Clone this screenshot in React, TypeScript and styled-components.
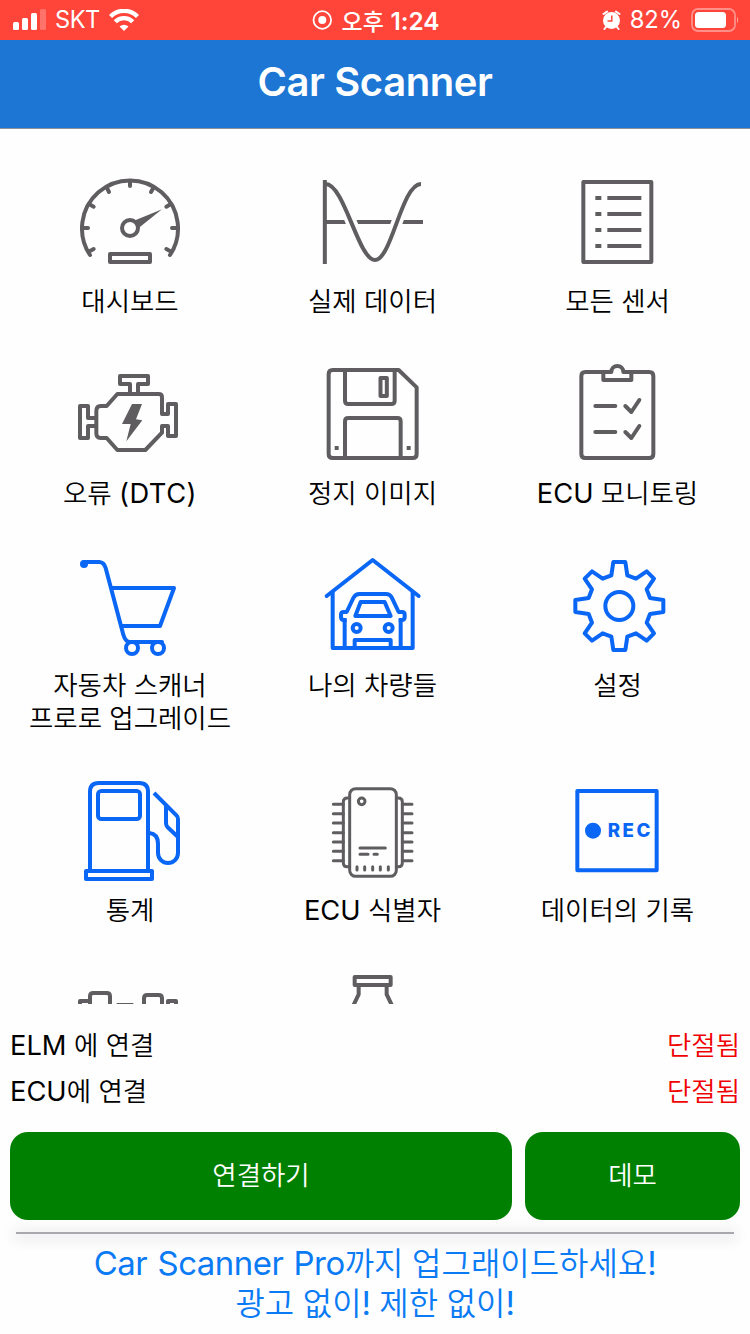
import React from "react";
import styled, { createGlobalStyle } from "styled-components";

const GREY = "#5f5d60";
const BLUE = "#0a66f5";

const GlobalStyle = createGlobalStyle`
  * { box-sizing: border-box; }
  body {
    margin: 0;
    background: #fefefe;
    font-family: Inter, "Noto Sans CJK KR", sans-serif;
  }
`;

const Screen = styled.div`
  width: 750px;
  height: 1334px;
  display: flex;
  flex-direction: column;
  overflow: hidden;
  background: #fefefe;
  color: #000;
`;

const StatusBar = styled.div`
  flex: none;
  height: 40px;
  display: grid;
  grid-template-columns: 1fr auto 1fr;
  align-items: center;
  padding: 0 11px 0 13px;
  background: #ff453a;
  color: #fff;
  font-size: 24px;
`;

const StatusGroup = styled.div<{ $align?: string }>`
  display: flex;
  align-items: center;
  justify-content: ${(p) => p.$align ?? "flex-start"};
  gap: 9px;
`;

const NavBar = styled.header`
  flex: none;
  height: 89px;
  display: flex;
  align-items: center;
  justify-content: center;
  padding-bottom: 4px;
  background: #1d76d4;
  border-bottom: 1px solid #8d9299;
`;

const Title = styled.h1`
  margin: 0;
  color: #fff;
  font-size: 40px;
  font-weight: 600;
  line-height: 48px;
  letter-spacing: -0.4px;
`;

const Menu = styled.main`
  flex: none;
  height: 875px;
  overflow: hidden;
  display: grid;
  grid-template-columns: 240px 245px 245px;
  align-content: start;
  row-gap: 48px;
  padding: 43px 10px 0;
`;

const Tile = styled.div`
  display: flex;
  flex-direction: column;
  align-items: center;
  gap: 11px;
`;

const IconBox = styled.svg<{ $color: string }>`
  display: block;
  width: 100px;
  height: 100px;
  overflow: visible;
  fill: none;
  stroke: ${(p) => p.$color};
  stroke-width: 12;
  stroke-linejoin: round;
  color: ${(p) => p.$color};
`;

const TileLabel = styled.div`
  text-align: center;
`;

const Line = styled.div<{ $size?: number; $weight?: number; $spacing?: number }>`
  height: ${(p) => ((p.$size ?? 28) * 33) / 28}px;
  line-height: ${(p) => ((p.$size ?? 28) * 33) / 28}px;
  font-size: ${(p) => p.$size ?? 28}px;
  font-weight: ${(p) => p.$weight ?? 400};
  letter-spacing: ${(p) => p.$spacing ?? 0}px;
  white-space: pre;
  word-spacing: 1.5px;
`;

const Latin = styled.span<{ $spacing?: number }>`
  font-size: 0.975em;
  letter-spacing: ${(p) => p.$spacing ?? 0}px;
`;

const Hangul = styled.span<{ $weight: number }>`
  font-family: "Noto Sans CJK KR", sans-serif;
  font-size: 0.945em;
  font-weight: ${(p) => p.$weight};
`;

const Footer = styled.footer`
  flex: 1;
  display: flex;
  flex-direction: column;
  padding: 16px 10px 0;
`;

const StatusRow = styled.div`
  display: flex;
  justify-content: space-between;
  align-items: center;
  height: 46px;
`;

const StateText = styled.div`
  color: #f00000;
`;

const Buttons = styled.div`
  display: grid;
  grid-template-columns: 502px 215px;
  justify-content: space-between;
  margin-top: 20px;
`;

const Button = styled.button`
  height: 88px;
  border: 0;
  border-radius: 18px;
  padding: 0 0 5px;
  background: #008000;
  color: #fff;
  font-family: inherit;
`;

const Divider = styled.div`
  height: 2px;
  margin: 12px 6px 0;
  background: #aaa8ac;
  box-shadow: 0 2px 14px 2px rgba(70, 50, 80, 0.16);
`;

const Promo = styled.div`
  display: flex;
  flex-direction: column;
  align-items: center;
  padding-top: 8px;
  color: #0a7bf5;
`;

interface MixedProps {
  text: string;
  size?: number;
  weight?: number;
  spacing?: number;
}

function Mixed({ text, size, weight = 350, spacing }: MixedProps) {
  const parts = text.match(/[A-Za-z0-9()!:]+(?: [A-Za-z]+)*|[^A-Za-z0-9()!:]+/g) ?? [];
  return (
    <Line $size={size}>
      {parts.map((part, i) =>
        /[A-Za-z0-9()!:]/.test(part) ? (
          <Latin key={i} $spacing={spacing}>{part}</Latin>
        ) : (
          <Hangul key={i} $weight={weight}>{part}</Hangul>
        )
      )}
    </Line>
  );
}

interface Item {
  lines: string[];
  spacing?: number;
  color: string;
  box: string;
  art: React.ReactNode;
}

const items: Item[] = [
  {
    lines: ["대시보드"],
    color: GREY,
    box: "240 36 300 300",
    art: (
      <>
        <path d="M270 285A144 144 0 1 1 510 285" strokeLinecap="round" />
        <path
          strokeLinecap="round"
          d="M390 62V78M320 82L327 96M460 84L453 96M267 132L281 140M513 132L499 140M250 204H264M530 204H516M270 273L281 267M510 273L499 267"
        />
        <circle cx="390" cy="204" r="24" />
        <path d="M402 182L486 148L416 204Z" fill="currentColor" stroke="none" />
        <rect x="330" y="282" width="120" height="24" />
      </>
    ),
  },
  {
    lines: ["실제 데이터"],
    color: GREY,
    box: "218 36 300 300",
    art: (
      <>
        <path d="M224 186H518" />
        <path d="M229 72C282 72 324 300 374 300S454 72 512 72" stroke="#fefefe" strokeWidth="34" />
        <path d="M223.5 60V312M226 72C282 72 324 300 374 300S454 72 512 72" />
      </>
    ),
  },
  {
    lines: ["모든 센서"],
    color: GREY,
    box: "954 36 300 300",
    art: (
      <>
        <rect x="1000" y="66" width="204" height="240" />
        <path d="M1036 114H1054M1072 114H1174M1036 162H1054M1072 162H1174M1036 210H1054M1072 210H1174M1036 258H1054M1072 258H1174" />
      </>
    ),
  },
  {
    lines: ["오류 (DTC)"],
    spacing: 0.5,
    color: GREY,
    box: "240 42 300 300",
    art: (
      <>
        <path d="M390 130V102H360V78H444V102H414V130" />
        <path d="M352 132H476Q486 132 486 142V192H504V162H528V258H504V228H486V248L436 300H352L320 264H302Q289 264 289 250V184Q289 168 302 168H320Z" />
        <path d="M289 204H264V168H240V264H264V228H289" />
        <path d="M396 162H426L408 208L427 211L379 274L392 222H366Z" fill="currentColor" stroke="none" />
      </>
    ),
  },
  {
    lines: ["정지 이미지"],
    color: GREY,
    box: "219 42 300 300",
    art: (
      <>
        <path d="M248 60H446L500 112V312Q500 324 488 324H248Q236 324 236 312V72Q236 60 248 60Z" />
        <path d="M285 60V152Q285 162 295 162H424Q434 162 434 152V60M285 324V214Q285 204 295 204H442Q452 204 452 214V324" />
        <rect x="391.5" y="84" width="19" height="54" />
        <path d="M254 294H266M470 294H482" />
      </>
    ),
  },
  {
    lines: ["ECU 모니토링"],
    color: GREY,
    box: "954 42 300 300",
    art: (
      <>
        <path d="M1006 66H1084A18 18 0 0 1 1120 66H1198Q1210 66 1210 78V312Q1210 324 1198 324H1006Q994 324 994 312V78Q994 66 1006 66Z" />
        <path d="M1060 66V90H1144V66" />
        <path strokeLinecap="round" d="M1036 168H1096M1126 168L1144 186L1168 150M1036 246H1096M1126 246L1144 264L1168 228" />
      </>
    ),
  },
  {
    lines: ["자동차 스캐너", "프로로 업그레이드"],
    color: BLUE,
    box: "240 48 300 300",
    art: (
      <>
        <circle cx="252" cy="72" r="12" fill="currentColor" stroke="none" />
        <path strokeLinecap="round" d="M252 66H298Q312 67 317 84L370 284Q376 305 390 306H486" />
        <path d="M336 144H522L480 258H366" />
        <circle cx="396" cy="324" r="18" fill="#fefefe" />
        <circle cx="474" cy="324" r="18" fill="#fefefe" />
      </>
    ),
  },
  {
    lines: ["나의 차량들"],
    color: BLUE,
    box: "219 48 300 300",
    art: (
      <>
        <path strokeLinecap="round" d="M230 168L368 60L506 168" />
        <path d="M248 156V324H488V156M284 238V324M452 238V324M314 324V300H422V324" />
        <path d="M290 240H282Q273 240 273 231V224Q273 216 281 216H290L310 174Q316 162 328 162H408Q419 162 425 172L446 216H456Q464 216 464 224V231Q464 240 455 240H446" />
        <path d="M332 186H404L422 228H316Z" />
        <circle cx="320" cy="264" r="12" />
        <circle cx="416" cy="264" r="12" />
      </>
    ),
  },
  {
    lines: ["설정"],
    color: BLUE,
    box: "954 48 300 300",
    art: (
      <g transform="translate(1108 198)">
        <path d="M-18-132L18-132L24-92L50-82L82-104L104-82L82-50L92-24L132-18L132 18L92 24L82 50L104 82L82 104L50 82L24 92L18 132L-18 132L-24 92L-50 82L-82 104L-104 82L-82 50L-92 24L-132 18L-132-18L-92-24L-82-50L-104-82L-82-104L-50-82L-24-92Z" />
        <circle r="42" />
      </g>
    ),
  },
  {
    lines: ["통계"],
    color: BLUE,
    box: "240 48 300 300",
    art: (
      <>
        <path d="M270 318V80Q270 54 296 54H418Q444 54 444 80V318" />
        <rect x="258" y="318" width="198" height="24" />
        <rect x="294" y="78" width="126" height="84" rx="10" />
        <path d="M448 204C466 206 474 218 474 236V264A30 30 0 0 0 534 264V162Q534 156 530 152L462 84M498 120V174Q498 182 503 187L534 216" />
      </>
    ),
  },
  {
    lines: ["ECU 식별자"],
    color: GREY,
    box: "219 48 300 300",
    art: (
      <g strokeWidth="9" strokeLinecap="round">
        <rect x="299" y="71" width="140" height="263" rx="18" />
        <path d="M299 99H292Q280 99 280 111V293Q280 305 292 305H299M439 99H445Q457 99 457 111V293Q457 305 445 305H439" />
        <path d="M250 118H280M250 146H280M250 174H280M250 203H280M250 231H280M250 259H280M250 287H280M457 118H486M457 146H486M457 174H486M457 203H486M457 231H486M457 259H486M457 287H486" />
        <circle cx="335" cy="109" r="10" />
        <path d="M330 249H406M330 268H354M372 268H382M321 305V315M344 305V315M368 305V315M391 305V315M415 305V315" />
      </g>
    ),
  },
  {
    lines: ["데이터의 기록"],
    color: BLUE,
    box: "954 48 300 300",
    art: (
      <>
        <rect x="982" y="78" width="238" height="238" />
        <circle cx="1029" cy="197" r="24" fill="currentColor" stroke="none" />
        <text x="1073" y="217" fontSize="56" fontWeight="800" textLength="128" fill="currentColor" stroke="none">
          REC
        </text>
      </>
    ),
  },
  {
    lines: [],
    color: GREY,
    box: "240 624 300 300",
    art: (
      <>
        <path d="M240 740V708H270M270 740V694Q270 684 280 684H320Q330 684 330 694V740M350 720H400" />
        <path d="M432 740V700Q432 690 442 690H476Q486 690 486 700V740M504 740V708H528V740" />
      </>
    ),
  },
  {
    lines: [],
    color: GREY,
    box: "219 624 300 300",
    art: <path d="M314 636H422V660H314ZM326 660V688L306 730M410 660V688L430 730" />,
  },
];

export default function App() {
  return (
    <Screen>
      <GlobalStyle />
      <StatusBar>
        <StatusGroup>
          <svg width="33" height="22" viewBox="0 0 33 22" fill="#fff">
            <rect y="13" width="6" height="8" rx="1.5" />
            <rect x="9" y="9" width="6" height="12" rx="1.5" />
            <rect x="18" y="4" width="6" height="17" rx="1.5" />
            <rect x="27" width="6" height="21" rx="1.5" opacity="0.25" />
          </svg>
          <Line $size={23.6} $spacing={-0.5}>SKT</Line>
          <svg width="30" height="22" viewBox="0 0 30 22" fill="none" stroke="#fff" strokeWidth="4.4">
            <path d="M1.5 7.5A19 19 0 0 1 28.5 7.5" />
            <path d="M6.3 12.8A12.2 12.2 0 0 1 23.7 12.8" />
            <path d="M10.5 17.5Q15 14 19.5 17.5L15 22Z" fill="#fff" stroke="none" />
          </svg>
        </StatusGroup>
        <StatusGroup>
          <svg width="20" height="20" viewBox="0.7 0 20 20" fill="none" stroke="#fff" strokeWidth="1.8" overflow="visible">
            <circle cx="10" cy="10" r="8.8" />
            <circle cx="10" cy="10" r="4" fill="#fff" stroke="none" />
          </svg>
          <Line $size={24.3} $weight={600}>
            <Hangul $weight={500}>오후 </Hangul>
            1:24
          </Line>
        </StatusGroup>
        <StatusGroup $align="flex-end">
          <svg width="19" height="20" viewBox="0 0 19 20" fill="none" stroke="#fff" strokeWidth="3">
            <circle cx="9.5" cy="10.5" r="8.5" fill="#fff" stroke="none" />
            <path d="M1.5 4L5 1.6M17.5 4L14 1.6M4 17L2.4 19M15 17L16.6 19" strokeLinecap="round" strokeWidth="2" />
            <path d="M9.8 5.5V11H5.5" stroke="#ff453a" strokeWidth="1.5" />
          </svg>
          <Line $size={23.7}>82%</Line>
          <svg width="48" height="24" viewBox="0 0 48 24">
            <rect x="1" y="1" width="43" height="22" rx="6" fill="none" stroke="#fff" strokeWidth="1.8" opacity="0.4" />
            <rect x="4" y="4" width="31" height="16" rx="3.5" fill="#fff" />
            <path d="M46 8.5Q48.5 12 46 15.5Z" fill="#fff" opacity="0.45" />
          </svg>
        </StatusGroup>
      </StatusBar>
      <NavBar>
        <Title>Car Scanner</Title>
      </NavBar>
      <Menu>
        {items.map((item, i) => (
          <Tile key={i}>
            <IconBox $color={item.color} viewBox={item.box}>
              {item.art}
            </IconBox>
            <TileLabel>
              {item.lines.map((line) => (
                <Mixed key={line} text={line} spacing={item.spacing} />
              ))}
            </TileLabel>
          </Tile>
        ))}
      </Menu>
      <Footer>
        <StatusRow>
          <Mixed text="ELM 에 연결" />
          <StateText>
            <Mixed text="단절됨" />
          </StateText>
        </StatusRow>
        <StatusRow>
          <Mixed text="ECU에 연결" />
          <StateText>
            <Mixed text="단절됨" />
          </StateText>
        </StatusRow>
        <Buttons>
          <Button>
            <Mixed text="연결하기" />
          </Button>
          <Button>
            <Mixed text="데모" />
          </Button>
        </Buttons>
        <Divider />
        <Promo>
          <Mixed size={33.8} spacing={-0.5} text="Car Scanner Pro까지 업그래이드하세요!" />
          <Mixed size={33.8} spacing={-0.4} text="광고 없이! 제한 없이!" />
        </Promo>
      </Footer>
    </Screen>
  );
}
